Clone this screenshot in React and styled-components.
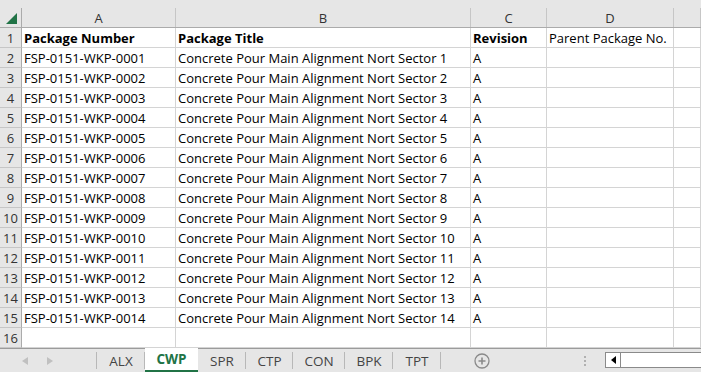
import React from 'react';
import styled, { createGlobalStyle } from 'styled-components';

const GlobalStyle = createGlobalStyle`
  html, body {
    margin: 0;
    padding: 0;
    background: #fff;
  }
  body {
    font-family: "Open Sans", "Liberation Sans", sans-serif;
  }
`;

const COLS = '22px 154px 295px 76px 127px 1fr';

const rows = Array.from({ length: 14 }, (_, i) => {
  const n = String(i + 1).padStart(4, '0');
  return [`FSP-0151-WKP-${n}`, `Concrete Pour Main Alignment Nort Sector ${i + 1}`, 'A', ''];
});

const tabs = ['ALX', 'CWP', 'SPR', 'CTP', 'CON', 'BPK', 'TPT'];

const Sheet = styled.div`
  width: 701px;
  height: 372px;
  overflow: hidden;
  display: flex;
  flex-direction: column;
  background: #fff;
`;

const TopStrip = styled.div`
  height: 8px;
  background: #e6e6e6;
`;

const HeaderRow = styled.div`
  display: grid;
  grid-template-columns: ${COLS};
  height: 19px;
  background: #e6e6e6;
  border-bottom: 1px solid #ababab;
`;

const ColHead = styled.div`
  border-right: 1px solid #c6c6c6;
  display: flex;
  align-items: center;
  justify-content: center;
  font-size: 13px;
  color: #333;
  position: relative;
`;

const Corner = styled(ColHead)`
  border-right-color: #ababab;
`;

const Triangle = styled.div`
  position: absolute;
  right: 4px;
  bottom: 3px;
  width: 0;
  height: 0;
  border-left: 11px solid transparent;
  border-bottom: 11px solid #217346;
`;

const Row = styled.div`
  display: grid;
  grid-template-columns: ${COLS};
  height: 20px;
`;

const RowHead = styled.div`
  background: #e6e6e6;
  border-right: 1px solid #ababab;
  border-bottom: 1px solid #c6c6c6;
  display: flex;
  align-items: center;
  justify-content: center;
  font-size: 13px;
  color: #333;
  box-sizing: border-box;
`;

const Cell = styled.div`
  border-right: 1px solid #d4d4d4;
  border-bottom: 1px solid #d4d4d4;
  box-sizing: border-box;
  padding: 0 2px;
  display: flex;
  align-items: center;
  font-size: 13px;
  font-weight: ${(p) => (p.$bold ? 700 : 400)};
  color: #000;
  white-space: nowrap;
  overflow: hidden;
`;

const TabBar = styled.div`
  height: 23px;
  border-top: 1px solid #9b9b9b;
  background: #e6e6e6;
  display: flex;
  align-items: stretch;
`;

const Nav = styled.div`
  width: 97px;
  display: flex;
  align-items: center;
  gap: 19px;
  padding-left: 22px;
  box-sizing: border-box;
  border-right: 1px solid #b8b8b8;
  margin: 3px 0;
`;

const NavArrow = styled.svg`
  width: 6px;
  height: 8px;
  fill: #c0c0c0;
`;

const Tab = styled.div`
  width: ${(p) => p.$w}px;
  box-sizing: border-box;
  display: flex;
  align-items: center;
  justify-content: center;
  font-size: 13.5px;
  color: ${(p) => (p.$active ? '#217346' : '#444')};
  font-weight: ${(p) => (p.$active ? 700 : 400)};
  background: ${(p) => (p.$active ? '#fff' : 'transparent')};
  border-bottom: ${(p) => (p.$active ? '2px solid #217346' : 'none')};
  margin-top: ${(p) => (p.$active ? '-1px' : '0')};
  position: relative;
  &::after {
    content: '';
    display: ${(p) => (p.$active ? 'none' : 'block')};
    position: absolute;
    right: 0;
    top: 3px;
    bottom: 3px;
    width: 1px;
    background: #b8b8b8;
  }
`;

const AddButton = styled.div`
  width: 82px;
  display: flex;
  align-items: center;
  padding-left: 33px;
  box-sizing: border-box;
`;

const Dots = styled.div`
  width: 24px;
  display: flex;
  flex-direction: column;
  align-items: center;
  justify-content: center;
  gap: 2px;
  margin-left: 50px;
  span {
    width: 2px;
    height: 2px;
    background: #b0b0b0;
  }
`;

const Scroll = styled.div`
  flex: 1;
  margin: 3px 0 4px 8px;
  display: flex;
  border: 1px solid #8a8a8a;
  border-right: none;
  background: #fff;
`;

const ScrollBtn = styled.div`
  width: 14px;
  display: flex;
  align-items: center;
  justify-content: center;
  border-right: 1px solid #8a8a8a;
`;

const tabWidths = [48, 53, 48, 47, 52, 48, 48];

export default function App() {
  return (
    <Sheet>
      <GlobalStyle />
      <TopStrip />
      <HeaderRow>
        <Corner>
          <Triangle />
        </Corner>
        {['A', 'B', 'C', 'D', ''].map((c, i) => (
          <ColHead key={i}>{c}</ColHead>
        ))}
      </HeaderRow>
      <Row>
        <RowHead>1</RowHead>
        <Cell $bold>Package Number</Cell>
        <Cell $bold>Package Title</Cell>
        <Cell $bold>Revision</Cell>
        <Cell>Parent Package No.</Cell>
        <Cell />
      </Row>
      {rows.map((r, i) => (
        <Row key={i}>
          <RowHead>{i + 2}</RowHead>
          {r.map((v, j) => (
            <Cell key={j}>{v}</Cell>
          ))}
          <Cell />
        </Row>
      ))}
      <Row>
        <RowHead>16</RowHead>
        <Cell />
        <Cell />
        <Cell />
        <Cell />
        <Cell />
      </Row>
      <TabBar>
        <Nav>
          <NavArrow viewBox="0 0 6 8">
            <path d="M6 0 L0 4 L6 8 Z" />
          </NavArrow>
          <NavArrow viewBox="0 0 6 8">
            <path d="M0 0 L6 4 L0 8 Z" />
          </NavArrow>
        </Nav>
        {tabs.map((t, i) => (
          <Tab key={t} $w={tabWidths[i]} $active={t === 'CWP'}>
            {t}
          </Tab>
        ))}
        <AddButton>
          <svg width="16" height="16" viewBox="0 0 16 16">
            <circle cx="8" cy="8" r="7" fill="none" stroke="#8a8a8a" strokeWidth="1.3" />
            <path d="M8 4.5 V11.5 M4.5 8 H11.5" stroke="#8a8a8a" strokeWidth="1.6" />
          </svg>
        </AddButton>
        <Dots>
          <span />
          <span />
          <span />
        </Dots>
        <Scroll>
          <ScrollBtn>
            <svg width="5" height="8" viewBox="0 0 5 8">
              <path d="M5 0 L0 4 L5 8 Z" fill="#000" />
            </svg>
          </ScrollBtn>
        </Scroll>
      </TabBar>
    </Sheet>
  );
}
